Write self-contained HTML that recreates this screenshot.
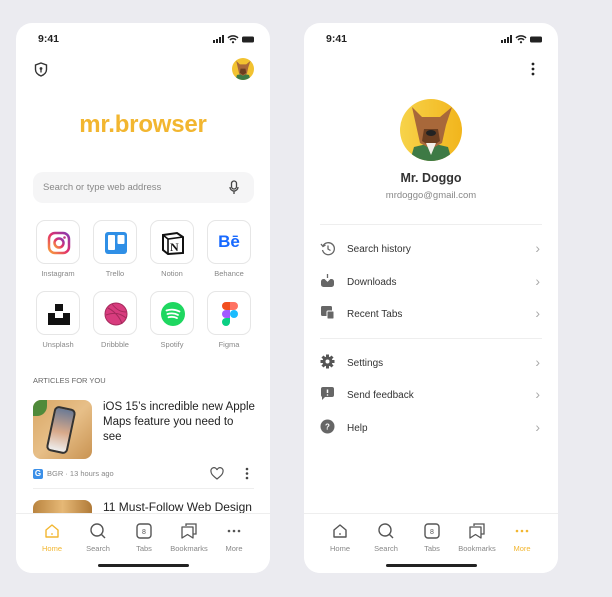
<!DOCTYPE html>
<html><head><meta charset="utf-8"><style>
*{margin:0;padding:0;box-sizing:border-box}
body{width:612px;height:597px;background:#ebebf0;font-family:"Liberation Sans",sans-serif;position:relative;overflow:hidden;color:#333}
.ph{position:absolute;top:23px;width:254px;height:550px;background:#fff;border-radius:16px;overflow:hidden}
.a{position:absolute}
.time{left:22px;top:10px;font-size:10.5px;font-weight:bold;color:#222}
.tabbar{position:absolute;left:0;right:0;top:490px;bottom:0;border-top:1px solid #eee;background:#fff}
.tab{position:absolute;top:8px;width:50px;text-align:center;font-size:7.5px;color:#888}
.tab svg{display:block;margin:0 auto 4px}
.home{position:absolute;left:82px;top:541px;width:91px;height:3px;background:#222;border-radius:2px}
.tile{position:absolute;width:44px;height:44px;border:1px solid #e6e6e6;border-radius:9px}
.lbl{position:absolute;width:60px;text-align:center;font-size:7.5px;color:#888}
.row{position:absolute;left:16px;right:16px;height:20px;font-size:10px;color:#333}
.row .t{position:absolute;left:27px;top:4px}
.row .c{position:absolute;right:2px;top:0px;color:#aaa;font-size:14px}
</style></head><body>

<div class="ph" style="left:16px">
 <div class="a time">9:41</div>
 <svg class="a" style="left:197px;top:12px" width="42" height="9"><rect x="0" y="5" width="2" height="3" fill="#222"/><rect x="3" y="4" width="2" height="4" fill="#222"/><rect x="6" y="2" width="2" height="6" fill="#222"/><rect x="9" y="0" width="2" height="8" fill="#222"/><path d="M15 3a7 7 0 0 1 10 0M17 5a4 4 0 0 1 6 0" stroke="#222" stroke-width="1.5" fill="none"/><circle cx="20" cy="7.2" r="1.1" fill="#222"/><rect x="29" y="1.5" width="12" height="6" rx="1.5" fill="#222"/></svg>
 <svg class="a" style="left:18px;top:39px" width="14" height="15" viewBox="0 0 14 15"><path d="M7 1 L12.5 3 V7.5 C12.5 10.5 10 12.8 7 14 C4 12.8 1.5 10.5 1.5 7.5 V3 Z" fill="none" stroke="#333" stroke-width="1.4"/><circle cx="7" cy="6.5" r="1.4" fill="#333"/><path d="M7 7.5v3" stroke="#333" stroke-width="1.3"/></svg>
 <svg class="a" style="left:216px;top:35px" width="22" height="22" viewBox="0 0 62 62"><defs><clipPath id="cc2"><circle cx="31" cy="31" r="31"/></clipPath></defs><g clip-path="url(#cc2)"><rect width="62" height="62" fill="#f2c230"/><path d="M10 62 L14 48 L31 44 L48 48 L52 62Z" fill="#3e7a45"/><path d="M12 8 L22 18 L40 18 L52 8 L46 26 L42 44 L31 50 L20 44 L16 26 Z" fill="#a8683a"/><path d="M24 30 L38 30 L40 42 L31 48 L22 42 Z" fill="#6b3e20"/></g></svg>
 <div class="a" style="left:0;width:254px;top:88px;text-align:center;font-size:24px;font-weight:bold;color:#f2b630;letter-spacing:-.2px">mr.browser</div>
 <div class="a" style="left:17px;top:149px;width:221px;height:31px;background:#f5f5f6;border-radius:10px"></div>
 <div class="a" style="left:27px;top:159px;font-size:9.5px;color:#888">Search or type web address</div>
 <svg class="a" style="left:213px;top:157px" width="10" height="15"><rect x="2.5" y="1" width="5" height="8" rx="2.5" fill="none" stroke="#444" stroke-width="1.3"/><path d="M1 7a4 4 0 0 0 8 0M5 11v3" stroke="#444" stroke-width="1.3" fill="none"/></svg>

 <div class="tile" style="left:20px;top:197px"><svg style="margin:10px" width="24" height="24"><defs><linearGradient id="ig" x1="0" y1="1" x2="1" y2="0"><stop offset="0" stop-color="#f9a03a"/><stop offset=".5" stop-color="#e1306c"/><stop offset="1" stop-color="#833ab4"/></linearGradient></defs><rect x="2" y="2" width="20" height="20" rx="6" fill="none" stroke="url(#ig)" stroke-width="2.5"/><circle cx="12" cy="12" r="4.5" fill="none" stroke="url(#ig)" stroke-width="2.5"/><circle cx="17.5" cy="6.5" r="1.3" fill="#c13584"/></svg></div>
 <div class="tile" style="left:77px;top:197px"><svg style="margin:10px" width="24" height="24"><rect x="1" y="1" width="22" height="22" rx="3" fill="#2f8fe6"/><rect x="4" y="4" width="7" height="15" rx="1" fill="#fff"/><rect x="13.5" y="4" width="7" height="9" rx="1" fill="#fff"/></svg></div>
 <div class="tile" style="left:134px;top:197px"><svg style="margin:10px" width="24" height="24"><path d="M2 4 L16 2 L22 6 V22 L7 23 L2 19 Z" fill="#fff" stroke="#111" stroke-width="2"/><path d="M2 4 L7 8 L22 6 M7 8 V23" stroke="#111" stroke-width="1.6" fill="none"/><text x="9" y="20" font-family="Liberation Serif" font-weight="bold" font-size="12" fill="#111">N</text></svg></div>
 <div class="tile" style="left:191px;top:197px;text-align:center;line-height:42px;color:#1769ff;font-weight:bold;font-size:17px">Bē</div>
 <div class="lbl" style="left:12px;top:246px">Instagram</div>
 <div class="lbl" style="left:69px;top:246px">Trello</div>
 <div class="lbl" style="left:126px;top:246px">Notion</div>
 <div class="lbl" style="left:183px;top:246px">Behance</div>

 <div class="tile" style="left:20px;top:268px"><svg style="margin:10px" width="24" height="24"><rect x="8" y="2" width="8" height="7" fill="#111"/><path d="M1 11 H8 V16 H16 V11 H23 V23 H1 Z" fill="#111"/></svg></div>
 <div class="tile" style="left:77px;top:268px"><svg style="margin:10px" width="24" height="24"><circle cx="12" cy="12" r="11" fill="#d83c7e" stroke="#a52a5c" stroke-width="1"/><path d="M4 6c6 3 12 9 14 16M2 13c8-3 14-2 20 3M8 2c4 5 8 8 14 8" stroke="#a52a5c" stroke-width="1" fill="none"/></svg></div>
 <div class="tile" style="left:134px;top:268px"><svg style="margin:10px" width="24" height="24"><circle cx="12" cy="12" r="12" fill="#1ed760"/><path d="M5.5 8.5c4-1.3 9-1 13 1M6.5 12c3.5-1 7.5-.7 10.5.9M7.5 15.3c3-.8 6-.5 8.5.8" stroke="#fff" stroke-width="1.8" fill="none" stroke-linecap="round"/></svg></div>
 <div class="tile" style="left:191px;top:268px"><svg style="margin:10px 14px" width="16" height="24"><path d="M8 0H4a4 4 0 0 0 0 8h4z" fill="#f24e1e"/><path d="M8 0h4a4 4 0 0 1 0 8H8z" fill="#ff7262"/><path d="M8 8H4a4 4 0 0 0 0 8h4z" fill="#a259ff"/><circle cx="12" cy="12" r="4" fill="#1abcfe"/><path d="M8 16H4a4 4 0 1 0 4 4z" fill="#0acf83"/></svg></div>
 <div class="lbl" style="left:12px;top:317px">Unsplash</div>
 <div class="lbl" style="left:69px;top:317px">Dribbble</div>
 <div class="lbl" style="left:126px;top:317px">Spotify</div>
 <div class="lbl" style="left:183px;top:317px">Figma</div>

 <div class="a" style="left:17px;top:353px;font-size:7.5px;color:#666">ARTICLES FOR YOU</div>
 <div class="a" style="left:17px;top:377px;width:59px;height:59px;border-radius:8px;background:linear-gradient(135deg,#d9a765,#e7bf88 50%,#c99352)"><div style="position:absolute;left:17px;top:7px;width:22px;height:46px;border-radius:5px;background:linear-gradient(#6b7a95,#d8a98a 55%,#eee);border:2px solid #333;transform:rotate(12deg)"></div><div style="position:absolute;left:0;top:0;width:14px;height:16px;border-radius:8px 0 10px 0;background:#4f8a3a"></div></div>
 <div class="a" style="left:87px;top:377px;width:170px;font-size:11.5px;line-height:15px;color:#222;white-space:nowrap">iOS 15’s incredible new Apple<br>Maps feature you need to<br>see</div>
 <div class="a" style="left:17px;top:446px;width:10px;height:10px;background:#3b8fe8;border-radius:2px;color:#fff;font-size:8px;font-weight:bold;text-align:center;line-height:10px">G</div>
 <div class="a" style="left:31px;top:446px;font-size:7.5px;color:#888">BGR · 13 hours ago</div>
 <svg class="a" style="left:194px;top:444px" width="14" height="13"><path d="M7 12 C2 8 1 6.5 1 4.5 A3 3 0 0 1 7 3 A3 3 0 0 1 13 4.5 C13 6.5 12 8 7 12Z" fill="none" stroke="#555" stroke-width="1.2"/></svg>
 <svg class="a" style="left:229px;top:444px" width="4" height="13"><circle cx="2" cy="2" r="1.3" fill="#444"/><circle cx="2" cy="6.5" r="1.3" fill="#444"/><circle cx="2" cy="11" r="1.3" fill="#444"/></svg>
 <div class="a" style="left:17px;top:465px;width:221px;height:1px;background:#eee"></div>
 <div class="a" style="left:17px;top:477px;width:59px;height:20px;border-radius:8px 8px 0 0;background:linear-gradient(90deg,#b9843f,#e6b876,#b07a38)"></div>
 <div class="a" style="left:87px;top:477px;font-size:12px;color:#222">11 Must-Follow Web Design</div>

 <div class="tabbar">
  <div class="tab" style="left:11px;color:#f2b630"><svg width="18" height="18"><path d="M3 8 L9 3 L15 8 V15 H3 Z" fill="none" stroke="#f2b630" stroke-width="1.4" stroke-linejoin="round"/><circle cx="9" cy="12" r=".9" fill="#f2b630"/></svg>Home</div>
  <div class="tab" style="left:57px"><svg width="18" height="18"><circle cx="8" cy="8" r="6" fill="none" stroke="#555" stroke-width="1.4"/><path d="M12.5 12.5 L16 16" stroke="#555" stroke-width="1.4"/></svg>Search</div>
  <div class="tab" style="left:103px"><svg width="18" height="18"><rect x="2" y="2" width="14" height="14" rx="3" fill="none" stroke="#555" stroke-width="1.4"/><text x="9" y="12" text-anchor="middle" font-size="7" fill="#555" font-family="Liberation Sans">8</text></svg>Tabs</div>
  <div class="tab" style="left:148px"><svg width="18" height="18"><path d="M6 4 V2 H16 V12 H13" fill="none" stroke="#555" stroke-width="1.3"/><path d="M2 5 H13 V16 L7.5 12.5 L2 16 Z" fill="none" stroke="#555" stroke-width="1.3" stroke-linejoin="round"/></svg>Bookmarks</div>
  <div class="tab" style="left:193px"><svg width="18" height="18"><circle cx="4" cy="9" r="1.3" fill="#555"/><circle cx="9" cy="9" r="1.3" fill="#555"/><circle cx="14" cy="9" r="1.3" fill="#555"/></svg>More</div>
 </div>
 <div class="home"></div>
</div>

<div class="ph" style="left:304px">
 <div class="a time">9:41</div>
 <svg class="a" style="left:197px;top:12px" width="42" height="9"><rect x="0" y="5" width="2" height="3" fill="#222"/><rect x="3" y="4" width="2" height="4" fill="#222"/><rect x="6" y="2" width="2" height="6" fill="#222"/><rect x="9" y="0" width="2" height="8" fill="#222"/><path d="M15 3a7 7 0 0 1 10 0M17 5a4 4 0 0 1 6 0" stroke="#222" stroke-width="1.5" fill="none"/><circle cx="20" cy="7.2" r="1.1" fill="#222"/><rect x="29" y="1.5" width="12" height="6" rx="1.5" fill="#222"/></svg>
 <svg class="a" style="left:227px;top:39px" width="4" height="14"><circle cx="2" cy="2" r="1.4" fill="#222"/><circle cx="2" cy="7" r="1.4" fill="#222"/><circle cx="2" cy="12" r="1.4" fill="#222"/></svg>
 <svg class="a" style="left:96px;top:76px" width="62" height="62" viewBox="0 0 62 62"><defs><clipPath id="cc"><circle cx="31" cy="31" r="31"/></clipPath><linearGradient id="yg" x1="0" x2="1"><stop offset="0" stop-color="#f7d34a"/><stop offset="1" stop-color="#f2b51c"/></linearGradient></defs><g clip-path="url(#cc)"><rect width="62" height="62" fill="url(#yg)"/><path d="M10 62 L14 48 L31 44 L48 48 L52 62Z" fill="#3e7a45"/><path d="M12 8 L22 18 L40 18 L52 8 L46 26 L42 44 L31 50 L20 44 L16 26 Z" fill="#a8683a"/><path d="M24 30 L38 30 L40 42 L31 48 L22 42 Z" fill="#6b3e20"/><ellipse cx="31" cy="34" rx="5" ry="3" fill="#222"/><path d="M26 44 L31 56 L36 44Z" fill="#f2efe8"/></g></svg>
 <div class="a" style="left:0;width:254px;top:148px;text-align:center;font-size:12.5px;font-weight:bold;color:#333">Mr. Doggo</div>
 <div class="a" style="left:0;width:254px;top:167px;text-align:center;font-size:9.5px;color:#888">mrdoggo@gmail.com</div>
 <div class="a" style="left:16px;top:201px;width:222px;height:1px;background:#eee"></div>
 <div class="row" style="top:217px"><svg class="a" style="left:0;top:1px" width="15" height="15"><path d="M3 5 A6 6 0 1 1 2.5 9" fill="none" stroke="#666" stroke-width="1.3"/><path d="M1 3 L3 5.5 L5.5 4" fill="none" stroke="#666" stroke-width="1.3"/><path d="M8 4.5 V8 L10.5 9.5" stroke="#666" stroke-width="1.3" fill="none"/></svg><span class="t">Search history</span><span class="c">›</span></div>
 <div class="row" style="top:250px"><svg class="a" style="left:0;top:0" width="15" height="15"><rect x="1" y="6" width="13" height="8" rx="2.5" fill="#666"/><path d="M7.5 1 V8 M5 5.5 L7.5 8 L10 5.5" stroke="#fff" stroke-width="1.3" fill="none"/><path d="M7.5 1 V5" stroke="#666" stroke-width="1.3"/></svg><span class="t">Downloads</span><span class="c">›</span></div>
 <div class="row" style="top:282px"><svg class="a" style="left:0;top:0" width="15" height="15"><rect x="1" y="1" width="11" height="10" rx="1.5" fill="#666"/><rect x="7" y="6" width="7" height="8" rx="1" fill="#666" stroke="#fff" stroke-width="1"/></svg><span class="t">Recent Tabs</span><span class="c">›</span></div>
 <div class="a" style="left:16px;top:315px;width:222px;height:1px;background:#eee"></div>
 <div class="row" style="top:331px"><svg class="a" style="left:0;top:0" width="15" height="15"><circle cx="7.5" cy="7.5" r="5" fill="#555"/><g stroke="#555" stroke-width="3"><path d="M7.5 0.5V14.5M0.5 7.5H14.5M2.5 2.5L12.5 12.5M12.5 2.5L2.5 12.5"/></g><circle cx="7.5" cy="7.5" r="2" fill="#fff"/></svg><span class="t">Settings</span><span class="c">›</span></div>
 <div class="row" style="top:363px"><svg class="a" style="left:0;top:0" width="15" height="15"><path d="M1 3 a2 2 0 0 1 2-2 H12 a2 2 0 0 1 2 2 V9 a2 2 0 0 1-2 2 H5 L2 14 V11 a2 2 0 0 1-1-2Z" fill="#666"/><path d="M7.5 3.5 V7" stroke="#fff" stroke-width="1.5"/><circle cx="7.5" cy="9" r=".8" fill="#fff"/></svg><span class="t">Send feedback</span><span class="c">›</span></div>
 <div class="row" style="top:396px"><svg class="a" style="left:0;top:0" width="15" height="15"><circle cx="7.5" cy="7.5" r="7" fill="#666"/><text x="7.5" y="10.5" text-anchor="middle" font-size="8" font-weight="bold" fill="#fff" font-family="Liberation Sans">?</text></svg><span class="t">Help</span><span class="c">›</span></div>

 <div class="tabbar">
  <div class="tab" style="left:11px"><svg width="18" height="18"><path d="M3 8 L9 3 L15 8 V15 H3 Z" fill="none" stroke="#555" stroke-width="1.4" stroke-linejoin="round"/><circle cx="9" cy="12" r=".9" fill="#555"/></svg>Home</div>
  <div class="tab" style="left:57px"><svg width="18" height="18"><circle cx="8" cy="8" r="6" fill="none" stroke="#555" stroke-width="1.4"/><path d="M12.5 12.5 L16 16" stroke="#555" stroke-width="1.4"/></svg>Search</div>
  <div class="tab" style="left:103px"><svg width="18" height="18"><rect x="2" y="2" width="14" height="14" rx="3" fill="none" stroke="#555" stroke-width="1.4"/><text x="9" y="12" text-anchor="middle" font-size="7" fill="#555" font-family="Liberation Sans">8</text></svg>Tabs</div>
  <div class="tab" style="left:148px"><svg width="18" height="18"><path d="M6 4 V2 H16 V12 H13" fill="none" stroke="#555" stroke-width="1.3"/><path d="M2 5 H13 V16 L7.5 12.5 L2 16 Z" fill="none" stroke="#555" stroke-width="1.3" stroke-linejoin="round"/></svg>Bookmarks</div>
  <div class="tab" style="left:193px;color:#f2b630"><svg width="18" height="18"><circle cx="4" cy="9" r="1.3" fill="#f2b630"/><circle cx="9" cy="9" r="1.3" fill="#f2b630"/><circle cx="14" cy="9" r="1.3" fill="#f2b630"/></svg>More</div>
 </div>
 <div class="home"></div>
</div>
</body></html>
